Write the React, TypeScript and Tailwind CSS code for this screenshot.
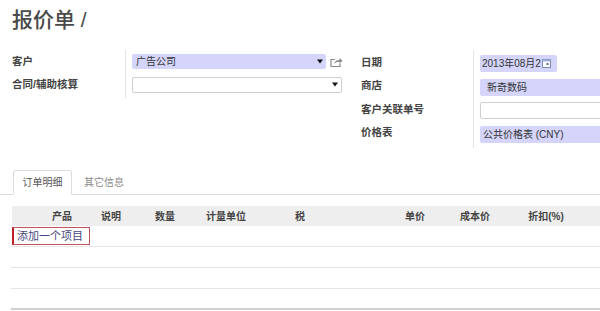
import React from "react";

const font = { fontFamily: '"Liberation Sans", "Noto Sans CJK SC", sans-serif' };

function Arrow() {
  return (
    <svg width="6" height="5" viewBox="0 0 6 5" className="shrink-0">
      <path d="M0 0.5h6L3 4.5z" fill="#111" />
    </svg>
  );
}

function ShareIcon() {
  return (
    <svg width="13" height="10" viewBox="0 0 13 10" className="shrink-0">
      <path d="M5 2.5H1v7h9V6.5" fill="none" stroke="#8a8a8a" strokeWidth="1.2" />
      <path d="M4 7c0.5-2.5 2.5-4 5.5-4V1l3 2.8-3 2.7V4.8C7 4.8 5.3 5.6 4 7z" fill="#8a8a8a" />
    </svg>
  );
}

function CalIcon() {
  return (
    <svg width="9" height="9" viewBox="0 0 9 9" className="shrink-0">
      <rect x="0.5" y="0.5" width="8" height="8" fill="#fff" stroke="#7c8ab0" />
      <rect x="0.5" y="0.5" width="8" height="2" fill="#9fb0d8" />
      <rect x="4.5" y="4" width="2" height="2" fill="#5b6a94" />
    </svg>
  );
}

const cols: { label: string; w: string }[] = [
  { label: "产品", w: "w-[50px]" },
  { label: "说明", w: "w-[48px]" },
  { label: "数量", w: "w-[60px]" },
  { label: "计量单位", w: "w-[62px]" },
  { label: "税", w: "w-[86px] mr-[42px]" },
  { label: "单价", w: "w-[60px]" },
  { label: "成本价", w: "w-[60px]" },
  { label: "折扣(%)", w: "w-[82px]" },
];

export default function App() {
  return (
    <div className="w-[600px] h-[311px] overflow-hidden bg-white text-[#333]" style={font}>
      <div className="pl-3 pt-[6px] text-[21px] font-medium leading-[27px] text-[#4a4a4a]">报价单 /</div>

      <div className="mt-[17px] flex items-start">
        {/* left group */}
        <div className="ml-3 flex w-[331px]">
          <div className="w-[115px] border-r border-[#e4e4e4] pb-[2px]">
            <div className="flex h-[23px] items-center text-[10.5px] font-bold text-[#444]">客户</div>
            <div className="flex h-[23px] items-center text-[10.5px] font-bold text-[#444]">合同/辅助核算</div>
          </div>
          <div className="flex-1 pl-[6px]">
            <div className="flex h-[23px] items-center gap-[4px]">
              <div className="flex h-[15px] w-[194px] items-center justify-between rounded-[2px] bg-[#d5d5fb] pl-[4px] pr-[3px] text-[10px] text-[#333]">
                <span>广告公司</span>
                <Arrow />
              </div>
              <ShareIcon />
            </div>
            <div className="flex h-[23px] items-center">
              <div className="flex h-[16px] w-[210px] items-center justify-end rounded-[2px] border border-[#cfcfcf] bg-white pr-[3px]">
                <Arrow />
              </div>
            </div>
          </div>
        </div>

        {/* right group */}
        <div className="ml-[18px] flex flex-1">
          <div className="w-[113px] border-r border-[#e4e4e4] pt-[1px] pb-[3px]">
            {["日期", "商店", "客户关联单号", "价格表"].map((l) => (
              <div key={l} className="flex h-[23.5px] items-center text-[10.5px] font-bold text-[#444]">
                {l}
              </div>
            ))}
          </div>
          <div className="flex-1 pl-[6px] pt-[2px]">
            <div className="flex h-[23.5px] items-center">
              <div className="flex h-[17px] w-[77px] items-center gap-[1px] rounded-[2px] bg-[#d5d5fb] pl-[2px] text-[10px] text-[#333]">
                <span>2013年08月2</span>
                <CalIcon />
              </div>
            </div>
            <div className="flex h-[23.5px] items-center">
              <div className="flex h-[17px] w-[130px] items-center rounded-[2px] bg-[#d5d5fb] pl-[7px] text-[10px] text-[#333]">
                新奇数码
              </div>
            </div>
            <div className="flex h-[23.5px] items-center">
              <div className="h-[17px] w-[130px] rounded-[2px] border border-[#cfcfcf] bg-white" />
            </div>
            <div className="flex h-[23.5px] items-center">
              <div className="flex h-[17px] w-[130px] items-center rounded-[2px] bg-[#d5d5fb] pl-[3px] text-[10px] text-[#333]">
                公共价格表 (CNY)
              </div>
            </div>
          </div>
        </div>
      </div>

      {/* tabs */}
      <div className="mt-[22px] flex h-[25px] items-end border-b border-[#dddddd]">
        <div className="ml-[13px] -mb-px flex h-[25px] w-[59px] items-center justify-center rounded-t-[3px] border border-b-white border-[#dddddd] bg-white text-[10px] text-[#555]">
          订单明细
        </div>
        <div className="flex h-[24px] items-center pl-[12px] text-[10px] text-[#8a8a8a]">其它信息</div>
      </div>

      {/* table */}
      <div className="ml-[11px] mt-[11px]">
        <div className="ml-px flex h-[20px] items-center bg-[#eeeeee] pl-[25px] text-[10px] font-bold text-[#444]">
          {cols.map((c) => (
            <div key={c.label} className={`${c.w} text-center`}>
              {c.label}
            </div>
          ))}
        </div>
        <div className="flex h-[21px] items-center border-b border-[#e6e6e6] pl-px">
          <div className="flex h-[18px] w-[78px] items-center border border-[#c2535b] border-l-[2px] border-l-[#c0202c] pl-[3px] text-[11px] text-[#46467e]">
            添加一个项目
          </div>
        </div>
        <div className="h-[21px] border-b border-[#e6e6e6]" />
        <div className="h-[21px] border-b border-[#e6e6e6]" />
        <div className="h-[21px] border-b-2 border-[#cfcfcf]" />
      </div>
    </div>
  );
}
